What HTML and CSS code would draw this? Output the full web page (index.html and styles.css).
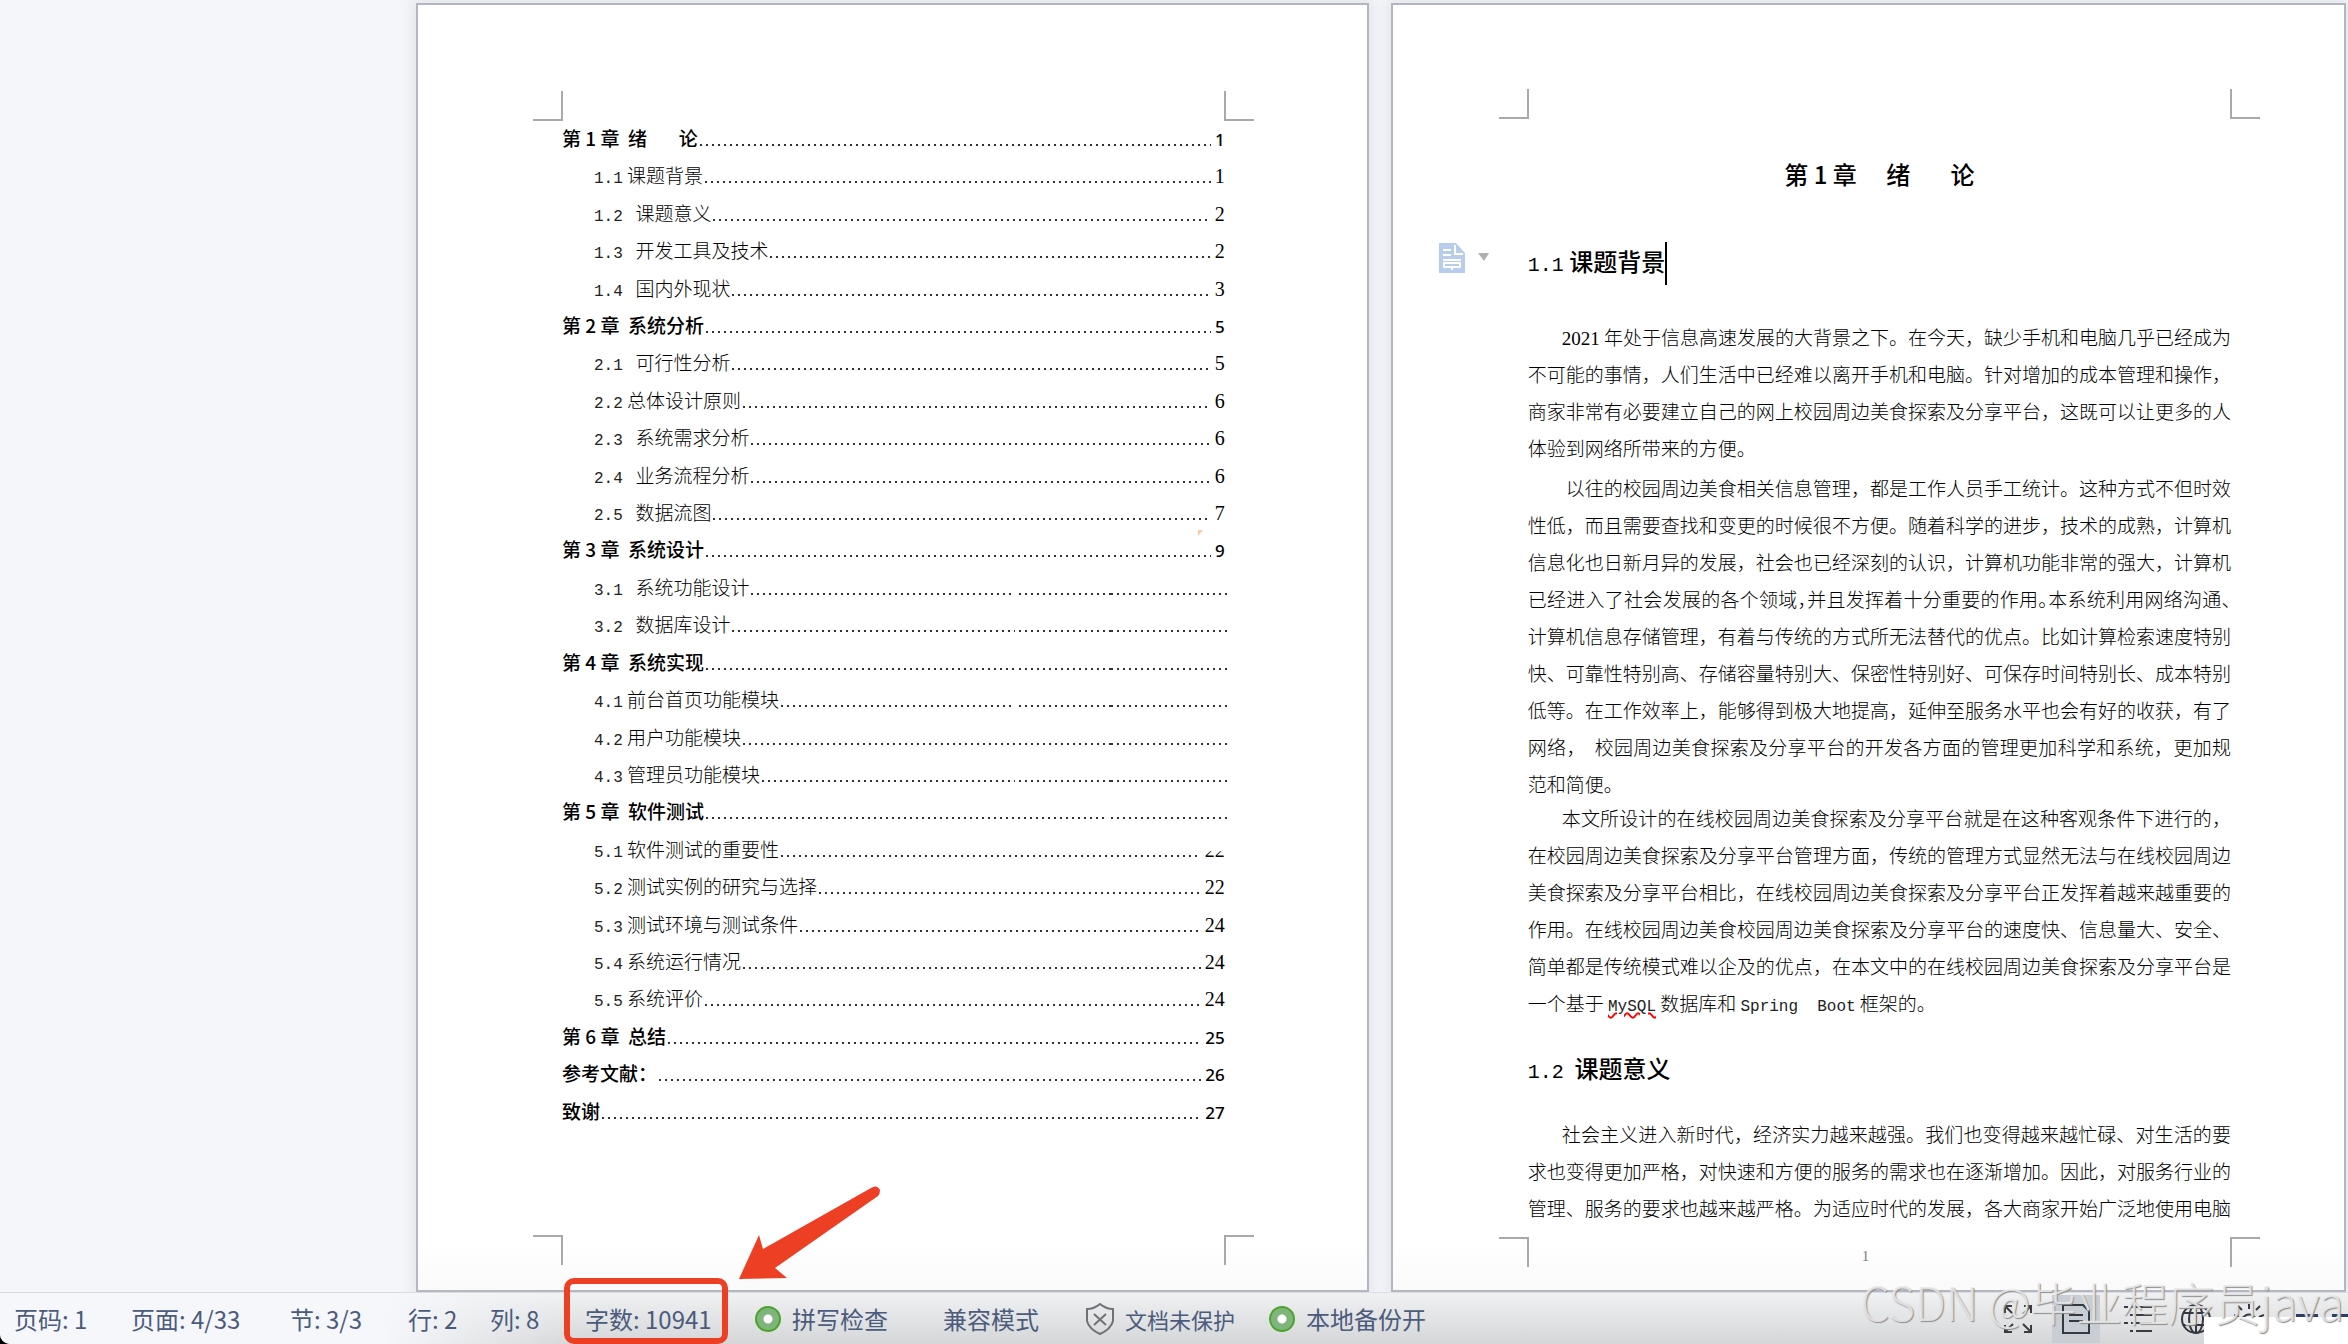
FILE: index.html
```html
<!DOCTYPE html>
<html lang="zh-CN">

<head>
    <meta charset="UTF-8">
    <meta name="viewport" content="width=device-width, initial-scale=1.0">
    <title>文档</title>
    <link rel="stylesheet" href="styles.css">
</head>

<body>
    <main class="desk">
        <section class="page toc-page">
            <div class="marks top"><span class="mark"></span><span class="mark"></span></div>
            <ul class="toc">
                <li class="chapter">第 1 章  绪　   论<span class="dots"></span><span class="num">1</span></li>
                <li><span class="sec">1.1</span> 课题背景<span class="dots"></span><span class="num">1</span></li>
                <li><span class="sec">1.2</span>   课题意义<span class="dots"></span><span class="num">2</span></li>
                <li><span class="sec">1.3</span>   开发工具及技术<span class="dots"></span><span class="num">2</span></li>
                <li><span class="sec">1.4</span>   国内外现状<span class="dots"></span><span class="num">3</span></li>
                <li class="chapter">第 2 章  系统分析<span class="dots"></span><span class="num">5</span></li>
                <li><span class="sec">2.1</span>   可行性分析<span class="dots"></span><span class="num">5</span></li>
                <li><span class="sec">2.2</span> 总体设计原则<span class="dots"></span><span class="num">6</span></li>
                <li><span class="sec">2.3</span>   系统需求分析<span class="dots"></span><span class="num">6</span></li>
                <li><span class="sec">2.4</span>   业务流程分析<span class="dots"></span><span class="num">6</span></li>
                <li><span class="sec">2.5</span>   数据流图<span class="dots"></span><span class="num">7</span></li>
                <li class="chapter">第 3 章  系统设计<span class="dots"></span><span class="num">9</span><i class="speck"></i></li>
                <li class="open"><span class="sec">3.1</span>   系统功能设计<span class="dots"></span><span class="dots mid"></span><span class="dots end"></span></li>
                <li class="open"><span class="sec">3.2</span>   数据库设计<span class="dots"></span><span class="dots mid"></span><span class="dots end"></span></li>
                <li class="chapter open">第 4 章  系统实现<span class="dots"></span><span class="dots mid"></span><span class="dots end"></span></li>
                <li class="open"><span class="sec">4.1</span> 前台首页功能模块<span class="dots"></span><span class="dots mid"></span><span class="dots end"></span></li>
                <li class="open"><span class="sec">4.2</span> 用户功能模块<span class="dots"></span><span class="dots mid"></span><span class="dots end"></span></li>
                <li class="open"><span class="sec">4.3</span> 管理员功能模块<span class="dots"></span><span class="dots mid"></span><span class="dots end"></span></li>
                <li class="chapter open">第 5 章  软件测试<span class="dots"></span><span class="dots end"></span></li>
                <li><span class="sec">5.1</span> 软件测试的重要性<span class="dots"></span><span class="num cut">22</span></li>
                <li><span class="sec">5.2</span> 测试实例的研究与选择<span class="dots"></span><span class="num">22</span></li>
                <li><span class="sec">5.3</span> 测试环境与测试条件<span class="dots"></span><span class="num">24</span></li>
                <li><span class="sec">5.4</span> 系统运行情况<span class="dots"></span><span class="num">24</span></li>
                <li><span class="sec">5.5</span> 系统评价<span class="dots"></span><span class="num">24</span></li>
                <li class="chapter">第 6 章  总结<span class="dots"></span><span class="num">25</span></li>
                <li class="chapter">参考文献：<span class="dots"></span><span class="num">26</span></li>
                <li class="chapter">致谢<span class="dots"></span><span class="num">27</span></li>
            </ul>
            <div class="marks bottom"><span class="mark"></span><span class="mark"></span></div>
        </section>

        <article class="page text-page">
            <div class="marks top"><span class="mark"></span><span class="mark"></span></div>
            <h1>第 1 章　 绪　   论</h1>
            <div class="heading">
                <button class="para-tool" aria-label="段落布局">
                    <svg width="52" height="30" viewBox="0 0 52 30">
                        <path d="M0 0h17l9 10v20H0z" fill="#b8cdec" />
                        <path d="M4 7h8M4 12h8M4 17h18M16 2v9h8M5 20h16v4H5zM13 24v3" fill="none" stroke="#fff" stroke-width="2" />
                        <path d="M39 10h11l-5 8z" fill="#b0b0b0" />
                    </svg>
                </button>
                <h2><span class="sec">1.1</span> 课题背景</h2><span class="caret"></span>
            </div>
            <p>
                <span class="line"><span class="latin">2021</span> 年处于信息高速发展的大背景之下。在今天，缺少手机和电脑几乎已经成为</span>
                <span class="line">不可能的事情，人们生活中已经难以离开手机和电脑。针对增加的成本管理和操作，</span>
                <span class="line">商家非常有必要建立自己的网上校园周边美食探索及分享平台，这既可以让更多的人</span>
                <span class="line last">体验到网络所带来的方便。</span>
            </p>
            <p class="wide-indent">
                <span class="line">以往的校园周边美食相关信息管理，都是工作人员手工统计。这种方式不但时效</span>
                <span class="line">性低，而且需要查找和变更的时候很不方便。随着科学的进步，技术的成熟，计算机</span>
                <span class="line">信息化也日新月异的发展，社会也已经深刻的认识，计算机功能非常的强大，计算机</span>
                <span class="line tight">已经进入了社会发展的各个领域，并且发挥着十分重要的作用。本系统利用网络沟通、</span>
                <span class="line">计算机信息存储管理，有着与传统的方式所无法替代的优点。比如计算检索速度特别</span>
                <span class="line">快、可靠性特别高、存储容量特别大、保密性特别好、可保存时间特别长、成本特别</span>
                <span class="line">低等。在工作效率上，能够得到极大地提高，延伸至服务水平也会有好的收获，有了</span>
                <span class="line">网络，&nbsp;&nbsp;校园周边美食探索及分享平台的开发各方面的管理更加科学和系统，更加规</span>
                <span class="line last">范和简便。</span>
            </p>
            <p>
                <span class="line">本文所设计的在线校园周边美食探索及分享平台就是在这种客观条件下进行的，</span>
                <span class="line">在校园周边美食探索及分享平台管理方面，传统的管理方式显然无法与在线校园周边</span>
                <span class="line">美食探索及分享平台相比，在线校园周边美食探索及分享平台正发挥着越来越重要的</span>
                <span class="line">作用。在线校园周边美食校园周边美食探索及分享平台的速度快、信息量大、安全、</span>
                <span class="line">简单都是传统模式难以企及的优点，在本文中的在线校园周边美食探索及分享平台是</span>
                <span class="line last">一个基于 <span class="sec typo">MySQL</span> 数据库和 <span class="sec">Spring&nbsp; Boot</span> 框架的。</span>
            </p>
            <h2 class="second"><span class="sec">1.2</span>&nbsp; 课题意义</h2>
            <p>
                <span class="line">社会主义进入新时代，经济实力越来越强。我们也变得越来越忙碌、对生活的要</span>
                <span class="line">求也变得更加严格，对快速和方便的服务的需求也在逐渐增加。因此，对服务行业的</span>
                <span class="line">管理、服务的要求也越来越严格。为适应时代的发展，各大商家开始广泛地使用电脑</span>
            </p>
            <div class="marks bottom"><span class="mark"></span><span class="page-no">1</span><span class="mark"></span></div>
        </article>
    </main>

    <footer class="status">
        <div class="info">
            <button>页码: 1</button>
            <button>页面: 4/33</button>
            <span>节: 3/3</span>
            <span>行: 2</span>
            <span>列: 8</span>
            <button class="words">字数: 10941
                <svg class="arrow" width="142" height="94" viewBox="0 0 142 94">
                    <path d="M0 93L20 49l4 14L132 2q6-4 9 2 0 4-2 6L36 82l12 10z" fill="#ec3f24" />
                </svg>
            </button>
            <button><i class="ring"></i>拼写检查</button>
            <button>兼容模式</button>
            <button class="small">
                <svg width="28" height="32" viewBox="0 0 28 32" fill="none" stroke="#6f7276" stroke-width="2">
                    <path d="M14 1Q8 6 1 6v12q2 8 13 13 11-5 13-13V6Q20 6 14 1z" />
                    <path d="M8 11l12 11M20 11L8 22" />
                </svg>文档未保护</button>
            <button><i class="ring"></i>本地备份开</button>
        </div>
        <div class="views">
            <button aria-label="全屏显示">
                <svg width="28" height="28" viewBox="0 0 28 28" fill="none" stroke="#3a3c40" stroke-width="2">
                    <path d="M1 8V1h7M1 1l8 8M20 1h7v7M27 1l-8 8M1 20v7h7M1 27l8-8M20 27h7v-7M27 27l-8-8" />
                </svg>
            </button>
            <button class="active" aria-label="页面视图">
                <svg width="28" height="30" viewBox="0 0 28 30" fill="none" stroke="#34383f" stroke-width="2">
                    <path d="M1 1h20l6 6v22H1zM7 11h14M7 17h14" />
                </svg>
            </button>
            <button class="outline" aria-label="大纲视图">
                <svg width="28" height="28" viewBox="0 0 28 28" fill="none" stroke="#3a3c40" stroke-width="2">
                    <path d="M0 2h4M7 2h3M12 2h16M6 10h3M12 10h16M0 18h4M7 18h3M12 18h16M6 26h3M12 26h16" />
                </svg>
            </button>
            <button class="web" aria-label="Web版式">
                <svg width="30" height="30" viewBox="0 0 30 30" fill="none" stroke="#34383f" stroke-width="2">
                    <circle cx="15" cy="15" r="14" />
                    <ellipse cx="15" cy="15" rx="7" ry="14" />
                    <path d="M15 1v28M3 9h24M3 21h24" />
                </svg>
            </button>
            <button class="eye" aria-label="护眼模式">
                <svg width="30" height="30" viewBox="0 0 30 30" fill="none" stroke="#34383f" stroke-width="2">
                    <path d="M15 0v5M4 2l4 4M26 2l-4 4M0 11l5 2M30 11l-5 2M7 16q8-11 16 0" />
                </svg>
            </button>
            <i class="zoom-line"></i><i class="zoom-line"></i>
        </div>
        <div class="patch"></div>
        <div class="watermark">CSDN @毕业程序员java</div>
    </footer>
</body>

</html>
```
FILE: styles.css
```css
*,
*::after {
    box-sizing: border-box;
}

body {
    margin: 0;
    height: 100vh;
    display: flex;
    flex-direction: column;
    overflow: hidden;
    background-color: #000;
    font-family: "Noto Sans CJK SC", "Noto Sans", sans-serif;
    color: #000;
}

button {
    position: relative;
    padding: 0;
    border: 0;
    background: none;
    font: inherit;
    color: inherit;
    text-align: left;
}

.desk {
    flex: 1;
    min-height: 0;
    display: grid;
    grid-template-columns: 1fr 1fr;
    gap: 22px;
    padding: 3px 2px 0 416px;
    background-color: #f4f6fa;
}

.page {
    display: flex;
    flex-direction: column;
    background: linear-gradient(#fff 0 96%, #fafafa);
    box-shadow: inset 0 0 0 2px #b4b7c2, 0 0 12px 4px #e3e5ea;
}

.toc-page {
    padding: 88px 144px 27px 146px;
}

.text-page {
    padding: 86px 115px 25px 137px;
}

/* crop marks */
.marks {
    display: flex;
    justify-content: space-between;
    margin: 0 -29px;
}

.mark {
    width: 30px;
    height: 30px;
    border: 0 solid #a9a9a9;
}

.mark:first-child {
    border-right-width: 2px;
}

.mark:last-child {
    border-left-width: 2px;
}

.top .mark {
    border-bottom-width: 2px;
}

.bottom .mark {
    border-top-width: 2px;
}

/* table of contents */
.toc {
    flex: 1;
    display: flex;
    flex-direction: column;
    margin: 2px 0 102px;
    padding: 0;
    list-style: none;
    font-size: 19px;
    font-weight: 300;
    line-height: 30px;
}

.toc li {
    position: relative;
    flex: 1 1 0;
    min-height: 0;
    display: flex;
    align-items: baseline;
    padding-left: 32px;
    white-space: pre;
}

.toc .chapter {
    padding-left: 0;
    font-weight: 500;
}

.toc .open {
    margin-right: -6px;
}

.sec {
    font-family: "Liberation Mono", monospace;
    font-size: 16px;
    color: #222;
}

.dots {
    flex: 1;
    height: 2px;
    margin: 0 4px 1px 2px;
    background: repeating-linear-gradient(90deg, #333 0 2px, transparent 2px 6px);
}

.mid,
.end {
    flex: none;
    margin: 0 0 3px;
}

.mid {
    width: 92px;
}

.end {
    width: 120px;
}

.num {
    font-family: "Liberation Serif", serif;
    font-size: 20px;
}

.chapter .num {
    font-family: "Noto Sans", sans-serif;
    font-size: 17px;
    font-weight: 500;
}

.cut {
    clip-path: inset(55% 0 0 0);
}

.speck {
    position: absolute;
    top: -4px;
    right: 22px;
    border-top: 6px solid #f6cfa4;
    border-right: 5px solid transparent;
}

/* body text */
h1,
h2 {
    margin: 0;
    font-size: 24px;
    font-weight: 500;
    line-height: 38px;
    white-space: pre;
}

h1 {
    margin: 36px 0 49px;
    text-align: center;
}

h2 .sec {
    font-size: 20px;
    color: #000;
}

.heading {
    position: relative;
    display: flex;
    margin-bottom: 33px;
}

.second {
    margin: 28px 0 23px;
}

.caret {
    width: 2px;
    background-color: #000;
}

.para-tool {
    position: absolute;
    left: -89px;
    top: 1px;
    line-height: 0;
}

p {
    margin: 0;
    font-size: 19px;
    font-weight: 300;
    line-height: 37px;
    text-indent: 34px;
}

.wide-indent {
    margin: 3px 0 -3px;
    text-indent: 38px;
}

.line {
    display: block;
    height: 37px;
    white-space: nowrap;
    text-align: justify;
    text-align-last: justify;
}

.line + .line {
    text-indent: 0;
}

.last {
    text-align-last: left;
}

.tight {
    font-feature-settings: "halt";
}

.latin {
    font-family: "Liberation Serif", serif;
}

.typo {
    text-decoration: underline wavy #f00 2px;
}

.text-page .bottom {
    margin-top: auto;
}

.page-no {
    padding: 12px 28px 0 0;
    font-family: "Liberation Serif", serif;
    font-size: 14px;
    line-height: 16px;
    color: #777;
}

/* status bar */
.status {
    position: relative;
    height: 52px;
    display: flex;
    justify-content: space-between;
    padding-left: 14px;
    border-top: 1px solid #d9dce0;
    border-bottom-left-radius: 10px;
    background: linear-gradient(90deg, #f5f7fa 0 380px, transparent 580px), linear-gradient(#eff1f3, #d5d6d8);
    font-size: 24px;
    line-height: 36px;
    color: #4c5b7c;
    white-space: nowrap;
}

.info {
    display: grid;
    grid-template-columns: 117px 159px 118px 82px 95px 170px 188px 143px 183px auto;
    align-items: center;
}

.info button {
    display: flex;
    align-items: center;
    gap: 11px;
}

.info .small {
    font-size: 22px;
}

.ring {
    width: 26px;
    height: 26px;
    border: 2px solid #4ea32f;
    border-radius: 50%;
    background: radial-gradient(#fff 0 4px, #7fb57c 5px);
}

.words::after {
    content: "";
    position: absolute;
    left: -21px;
    top: -23px;
    width: 164px;
    height: 66px;
    border: 6px solid #ec3f24;
    border-radius: 10px;
}

.arrow {
    position: absolute;
    left: 154px;
    top: -115px;
}

.views {
    display: flex;
    align-items: center;
    gap: 10px;
}

.views button {
    width: 48px;
    height: 48px;
    display: flex;
    align-items: center;
    justify-content: center;
}

.views .active {
    background-color: #c9ced5;
}

.views .outline {
    width: 56px;
}

.views .web {
    width: 40px;
}

.views .eye {
    width: 46px;
}

.zoom-line {
    align-self: flex-start;
    width: 22px;
    height: 3px;
    margin: 21px 0 0 14px;
    background-color: #2f3d63;
}

.zoom-line:last-child {
    width: 16px;
    margin-left: 4px;
}

.patch {
    position: absolute;
    right: 0;
    bottom: 0;
    width: 144px;
    height: 27px;
    background-color: #fff;
}

.watermark {
    position: absolute;
    right: 4px;
    top: -24px;
    font-size: 46px;
    font-weight: 300;
    line-height: 64px;
    color: rgba(235, 235, 235, 0.85);
    text-shadow: 1px 1px 1px #8f8f8f;
}
```
